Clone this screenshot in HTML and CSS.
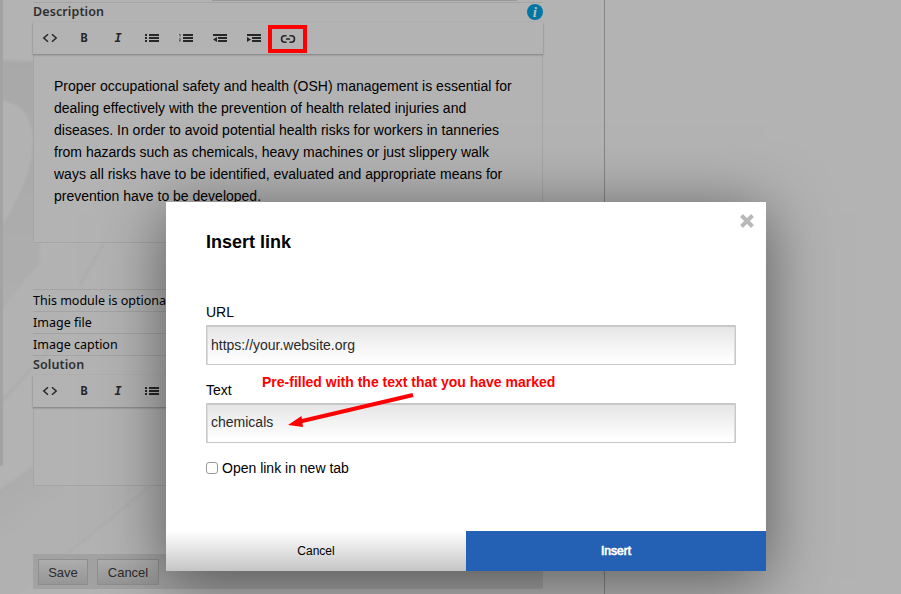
FILE: index.html
```html
<!DOCTYPE html>
<html lang="en">
<head>
<meta charset="utf-8">
<title>Edit module</title>
<link rel="stylesheet" href="styles.css">
</head>
<body>
<svg class="defs" width="0" height="0">
  <symbol id="code" viewBox="0 0 16 16"><path d="M6 4.2L1.8 8L6 11.8M10 4.2L14.2 8L10 11.8" fill="none" stroke="currentColor" stroke-width="1.5"/></symbol>
  <symbol id="list" viewBox="0 0 16 16"><path d="M1 4h2v2H1zM1 7h2v2H1zM1 10h2v2H1zM5 4h10v2H5zM5 7h10v2H5zM5 10h10v2H5z"/></symbol>
  <symbol id="numbers" viewBox="0 0 16 16"><path d="M5 4h10v2H5zM5 7h10v2H5zM5 10h10v2H5z"/><path d="M1.2 4.5h1v2.2M1 8.8h1.3v1l-1 1.2h1.5" fill="none" stroke="currentColor" stroke-width=".7"/></symbol>
  <symbol id="outdent" viewBox="0 0 16 16"><path d="M1 4h14v2H1zM6 7h9v2H6zM6 10h9v2H6zM5 7v5L1 9.5z"/></symbol>
  <symbol id="indent" viewBox="0 0 16 16"><path d="M1 4h14v2H1zM6 7h9v2H6zM6 10h9v2H6zM1 7v5l4-2.500z"/></symbol>
  <symbol id="link" viewBox="0 0 16 16"><path d="M6.500 4.800H4.700a3.200 3.200 0 0 0 0 6.400h1.800M9.500 4.800h1.800a3.200 3.200 0 0 1 0 6.400H9.500M6 8h4" fill="none" stroke="currentColor" stroke-width="1.6"/></symbol>
</svg>
<main class="page">
  <svg class="swoosh" width="166" height="594" viewBox="0 0 166 594">
    <defs>
      <linearGradient id="top" x1="0" y1="0" x2="0" y2="1"><stop offset="0" stop-color="#a8a8a8"/><stop offset="1" stop-color="#b0b0b0"/></linearGradient>
      <linearGradient id="band" gradientUnits="userSpaceOnUse" x1="40" y1="425" x2="85" y2="480"><stop offset="0" stop-color="#a9a9a9"/><stop offset="1" stop-color="#b1b1b1"/></linearGradient>
      <filter id="soft"><feGaussianBlur stdDeviation="1.500"/></filter>
    </defs>
    <g filter="url(#soft)">
      <path fill="url(#top)" d="M-5 60L40 62V330L-5 400z"/>
      <path class="light" d="M-5 98C18 100 30 112 33 132C37 158 25 195 -5 238z"/>
      <path class="line" d="M-5 98C18 100 30 112 33 132C37 158 25 195 -5 238"/>
      <path class="light" d="M-5 318L56 243H104L54 338L-5 415z"/>
      <path class="line" d="M104 243L80 285M60 338L0 403"/>
      <path fill="url(#band)" d="M-5 493L33 466L60 458L170 458L60 560L15 600H-5z"/>
      <path class="line" d="M150 486L60 560"/>
    </g>
  </svg>
  <div class="rail"></div>
  <div class="rail-right"></div>
  <div class="form">
    <header class="label first"><span>Description</span>
      <svg class="info" viewBox="0 0 16 16"><circle cx="8" cy="8" r="8"/><text x="7.800" y="13">i</text></svg>
    </header>
    <div class="toolbar">
      <span class="tool"><svg><use href="#code"/></svg></span><span class="tool">B</span><span class="tool italic">I</span>
      <span class="tool"><svg><use href="#list"/></svg></span><span class="tool"><svg><use href="#numbers"/></svg></span>
      <span class="tool"><svg><use href="#outdent"/></svg></span><span class="tool"><svg><use href="#indent"/></svg></span>
      <span class="tool marked"><svg><use href="#link"/></svg></span>
    </div>
    <div class="editor">Proper occupational safety and health (OSH) management is essential for<br>dealing effectively with the prevention of health related injuries and<br>diseases. In order to avoid potential health risks for workers in tanneries<br>from hazards such as chemicals, heavy machines or just slippery walk<br>ways all risks have to be identified, evaluated and appropriate means for<br>prevention have to be developed.</div>
    <div class="row">This module is optional</div>
    <div class="row">Image file</div>
    <div class="row last">Image caption</div>
    <div class="label second"><span>Solution</span></div>
    <div class="toolbar">
      <span class="tool"><svg><use href="#code"/></svg></span><span class="tool">B</span><span class="tool italic">I</span>
      <span class="tool"><svg><use href="#list"/></svg></span>
    </div>
    <div class="editor short"></div>
    <div class="actions"><button class="save">Save</button><button class="cancel">Cancel</button></div>
  </div>
</main>
<section class="modal">
  <div class="modal-body">
    <span class="close"><svg width="16" height="16" viewBox="0 0 16 16"><path d="M2.500 2.500L13.500 13.500M13.500 2.500L2.500 13.500"/></svg></span>
    <h1>Insert link</h1>
    <label class="name">URL</label>
    <div class="field">https://your.website.org</div>
    <label class="name">Text</label>
    <div class="field text">chemicals</div>
    <div class="check"><i></i><span>Open link in new tab</span></div>
  </div>
  <footer><div class="dismiss">Cancel</div><div class="insert">Insert</div></footer>
  <div class="note">Pre-filled with the text that you have marked</div>
  <svg class="arrow" width="130" height="40" viewBox="0 0 130 40"><path d="M125 2L12 28.500" fill="none" stroke="#f00" stroke-width="4"/><path d="M0 32L13.500 23L15 34z" fill="#f00"/></svg>
</section>
</body>
</html>
```
FILE: styles.css
```css
* { box-sizing: border-box; }
body { margin: 0; width: 901px; height: 594px; overflow: hidden; position: relative; background: #b3b3b3; font-family: "Liberation Sans", Arial, sans-serif; color: #000; }
.defs { position: absolute; }
.page { height: 594px; position: relative; }
.swoosh { position: absolute; left: 0; top: 0; }
.light { fill: #b2b2b2; }
.line { fill: none; stroke: #a8a8a8; stroke-width: 1.5; }
.rail { position: absolute; left: 0; top: 0; width: 3px; height: 466px; background: #a3a3a3; }
.rail-right { position: absolute; left: 604px; top: 0; width: 1px; height: 594px; background: #858585; }
.form { position: relative; width: 510px; margin-left: 33px; font-family: "Noto Sans", "Open Sans", sans-serif; font-size: 12px; }
.label { display: flex; justify-content: space-between; font-weight: 600; font-size: 12.5px; letter-spacing: .1px; color: #303030; }
.first { height: 22px; padding-top: 2px; line-height: 19px; background: linear-gradient(#a5a5a5, #a5a5a5) 0 2px / 100% 1px no-repeat, linear-gradient(#989898, #989898) 179px 0 / 305px 1px no-repeat; }
.second { height: 19px; line-height: 18px; }
.info { width: 16px; height: 16px; margin-top: 2px; }
.info circle { fill: #0077a3; }
.info text { font: italic bold 15px "Liberation Serif", serif; fill: #bbb; text-anchor: middle; }
.toolbar { position: relative; display: flex; height: 32px; background: #b3b3b3; box-shadow: 0 1px 2px rgba(0,0,0,.3); }
.tool { width: 34px; height: 32px; display: flex; align-items: center; justify-content: center; font: bold 12px "DejaVu Sans Mono", monospace; color: #272727; }
.tool svg { width: 16px; height: 16px; fill: currentColor; flex: none; }
.italic { font-style: italic; }
.marked { width: 39px; height: 28px; margin: 3px 0 0 -3px; padding-bottom: 1px; border: 4px solid #f00; }
.editor { height: 189px; padding: 21px 20px; border: 1px solid #a5a5a5; border-top: 0; background: #b3b3b3; font: 14px/22px "Liberation Sans", sans-serif; white-space: nowrap; margin-bottom: 46px; }
.row { height: 22px; border-top: 1px solid #a3a3a3; line-height: 21px; font-size: 12.5px; }
.last { height: 23px; border-bottom: 1px solid #a3a3a3; }
.short { height: 79px; margin-bottom: 68px; }
.actions { height: 35px; padding: 5px; display: flex; gap: 9px; background: #a2a2a2; }
button { height: 26px; padding: 0; border: 1px solid #8e8e8e; background: linear-gradient(#adadad, #969696); color: #2c2c2c; font: 13px "Liberation Sans", sans-serif; }
.save { width: 50px; }
.cancel { width: 62px; }
.modal { position: absolute; left: 166px; top: 202px; width: 600px; height: 369px; background: #fff; box-shadow: 0 10px 60px rgba(0,0,0,.5); }
.modal-body { height: 329px; padding: 28px 30px 0 40px; }
.close { position: absolute; right: 11px; top: 11px; }
.close svg { display: block; }
.close path { stroke: #b9b9b9; stroke-width: 4; }
h1 { margin: 0 0 48px; font-size: 18px; line-height: 24px; }
.name { display: block; height: 23px; line-height: 20px; font-size: 14px; }
.field { height: 40px; margin-bottom: 15px; padding-left: 4px; border: 1px solid #c8c8c8; border-top-width: 2px; border-radius: 1px; background: linear-gradient(#e6e6e6, #fff 95%); box-shadow: inset 1px 0 #ddd, inset -1px 0 #ddd; line-height: 37px; font-size: 14px; color: #292929; }
.text { line-height: 35px; }
.check { display: flex; align-items: center; gap: 4px; height: 20px; font-size: 14px; }
.check i { width: 12px; height: 12px; border: 1px solid #999; border-radius: 3px; background: #fff; }
footer { display: flex; height: 40px; font-size: 12px; line-height: 40px; text-align: center; }
footer div { width: 300px; }
.dismiss { background: linear-gradient(#fff, #c5c5c5); }
.insert { background: #2461b5; color: #fff; -webkit-text-stroke: .7px #fff; }
.note { position: absolute; left: 96px; top: 172px; line-height: 16px; font-size: 14px; font-weight: bold; color: #f00; white-space: nowrap; }
.arrow { position: absolute; left: 122px; top: 191px; }
```
